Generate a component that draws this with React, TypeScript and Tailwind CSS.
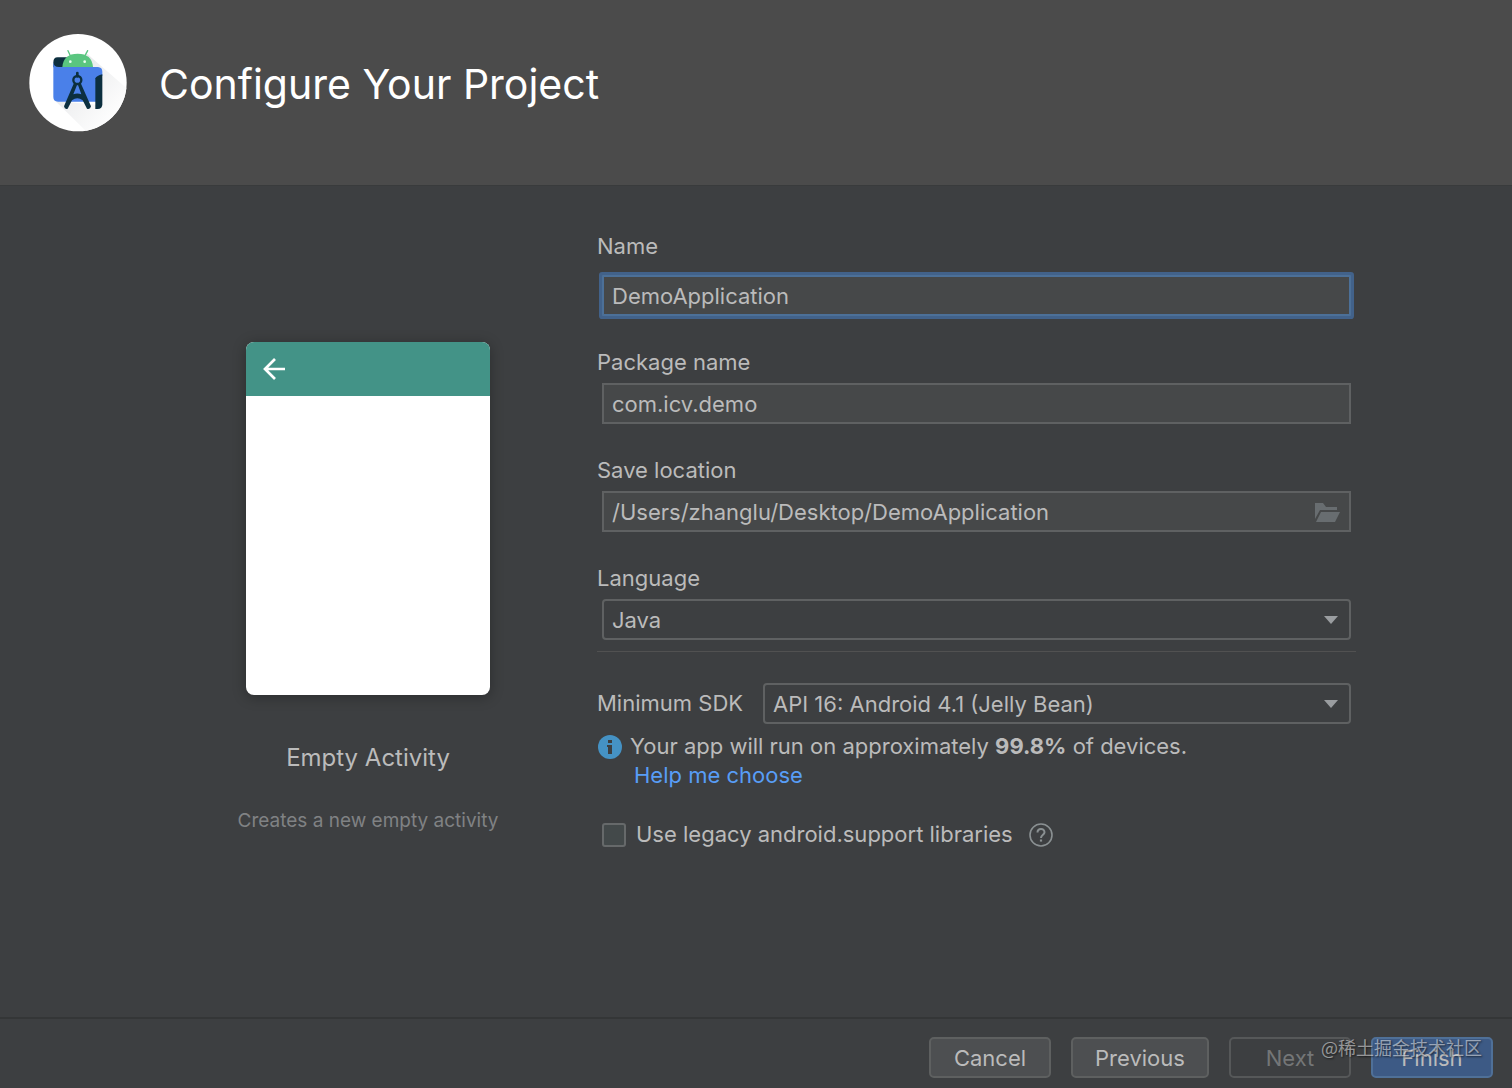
import { useState } from 'react';
import type { ReactNode } from 'react';

const fieldClass =
  'block h-[41px] w-full border-2 border-[#5f6162] bg-[#464849] px-2 text-[22px] text-[#bbbbbb] outline-none';

const buttonClass = 'h-[41px] rounded-[5px] border-2 pt-0.5 text-[22px]';

function StudioLogo() {
  return (
    <svg viewBox="27 27 294 294" className="size-[98px] shrink-0" aria-hidden="true">
      <defs>
        <linearGradient id="logo-shade" x1="0" y1="0" x2="0.8" y2="0.8">
          <stop offset="0.2" stopColor="#e6e7e9" />
          <stop offset="1" stopColor="#fdfdfd" />
        </linearGradient>
        <clipPath id="logo-disc">
          <circle cx="174" cy="173" r="146" />
        </clipPath>
      </defs>
      <circle cx="174" cy="173" r="146" fill="#ffffff" />
      <g clipPath="url(#logo-disc)">
        <path d="M196 82 L320 190 L320 320 L200 320 L106 228 L240 240 Z" fill="url(#logo-shade)" />
      </g>
      <path d="M113 97 H150 V127 H100 V112 Q100 97 113 97 Z" fill="#0c2f3f" />
      <path d="M100 110 Q100 126 117 126 H234 Q247 127 247 140 V153 Q228 153 228 166 V230 H114 Q100 230 100 216 Z" fill="#4a80e9" />
      <path d="M226 160 Q230 152 247 148 V238 Q247 252 233 252 H226 Z" fill="#0c2f3f" />
      <path d="M127 126 Q130 86 173 86 Q216 86 219 126 Z" fill="#5ac680" />
      <path d="M151 92 L144 77 M195 92 L203 77" stroke="#5ac680" strokeWidth="4" strokeLinecap="round" />
      <circle cx="151" cy="110" r="4" fill="#e8fff0" />
      <circle cx="194" cy="110" r="4" fill="#e8fff0" />
      <circle cx="172" cy="165" r="12" fill="none" stroke="#0c2f3f" strokeWidth="7" />
      <path d="M172 144 V154" stroke="#0c2f3f" strokeWidth="8" strokeLinecap="round" />
      <path d="M162 174 L132 244 Q134 254 143 251 L156 226 Q172 214 188 226 L201 251 Q211 254 213 244 L182 174 L174 180 L184 208 Q172 203 160 208 L171 180 Z" fill="#0c2f3f" />
    </svg>
  );
}

function FolderIcon() {
  return (
    <svg viewBox="0 0 25 19" className="h-[19px] w-[25px]" fill="#686d70" aria-hidden="true">
      <path d="M0 0 H8 L11 4 H22 V7 H5 L0 16 Z" />
      <path d="M6 9 H25 L20 19 H1 Z" />
    </svg>
  );
}

function InfoIcon() {
  return (
    <svg viewBox="0 0 24 24" className="mr-2 ml-px size-6 shrink-0" aria-hidden="true">
      <circle cx="12" cy="12" r="12" fill="#4592c4" />
      <path d="M10 5 H14 V8 H10 Z M9 10 H14 V19 H10 V12 H9 Z" fill="#3d3f41" />
    </svg>
  );
}

function HelpIcon() {
  return (
    <svg viewBox="0 0 24 24" className="size-6" fill="none" stroke="#8a9092" aria-hidden="true">
      <circle cx="12" cy="12" r="11" strokeWidth="1.6" />
      <path d="M8.5 9.5 C8.5 4.8 15.5 4.8 15.5 9.2 C15.5 11.8 12 11.7 12 15" strokeWidth="2" />
      <path d="M12 16.5 V18.6" strokeWidth="2.2" />
    </svg>
  );
}

interface DropdownProps {
  id: string;
  options: string[];
}

function Dropdown({ id, options }: DropdownProps) {
  return (
    <div className="relative flex-1">
      <select
        id={id}
        className="block h-[41px] w-full appearance-none rounded-[4px] border-2 border-[#5f6162] bg-[#3d3f41] px-2 pt-0.5 text-[22px] text-[#bbbbbb] outline-none"
      >
        {options.map((option) => (
          <option key={option}>{option}</option>
        ))}
      </select>
      <svg viewBox="0 0 14 8" className="pointer-events-none absolute top-[17px] right-[13px] h-2 w-3.5" fill="#9a9da0" aria-hidden="true">
        <path d="M0 0 H14 L7 8 Z" />
      </svg>
    </div>
  );
}

interface FieldProps {
  id: string;
  label: string;
  children: ReactNode;
}

function Field({ id, label, children }: FieldProps) {
  return (
    <div className="flex flex-col gap-[7px]">
      <label htmlFor={id} className="leading-7">{label}</label>
      <div className="mx-[5px] flex">{children}</div>
    </div>
  );
}

function TemplatePreview() {
  return (
    <section className="flex w-64 shrink-0 flex-col items-center pt-[156px]">
      <div className="h-[353px] w-[244px] overflow-hidden rounded-lg bg-white shadow-[0_2px_14px_rgba(0,0,0,0.3)]">
        <div className="flex h-[54px] items-center bg-[#439387] pl-[17px]">
          <svg viewBox="0 0 22 22" className="size-[22px]" fill="none" stroke="#ffffff" strokeWidth="2.7" aria-hidden="true">
            <path d="M22 11 H2 M12 1 L2 11 L12 21" />
          </svg>
        </div>
      </div>
      <h2 className="mt-12 text-2xl leading-[30px]">Empty Activity</h2>
      <p className="mt-[33px] text-[19px] leading-[30px] whitespace-nowrap text-[#808284]">Creates a new empty activity</p>
    </section>
  );
}

export default function App() {
  const [name, setName] = useState('DemoApplication');
  const [packageName, setPackageName] = useState('com.icv.demo');
  const [location, setLocation] = useState('/Users/zhanglu/Desktop/DemoApplication');
  const [legacy, setLegacy] = useState(false);

  return (
    <div className="flex min-h-screen flex-col bg-[#3d3f41] font-[Inter,sans-serif] text-[22px] text-[#bbbbbb]">
      <header className="flex h-[186px] items-start gap-8 border-b border-[#393b3c] bg-[#4b4b4b] pt-[34px] pl-[29px]">
        <StudioLogo />
        <h1 className="text-[41px] leading-[100px] text-white">Configure Your Project</h1>
      </header>

      <main className="flex flex-1 gap-[101px] pr-[156px] pl-60">
        <TemplatePreview />

        <form className="flex-1 pt-[46px]" onSubmit={(e) => e.preventDefault()}>
          <div className="flex flex-col gap-8">
            <div className="flex flex-col gap-[15px]">
              <label htmlFor="name" className="leading-7">Name</label>
              <div className="mx-[5px]">
                <input
                  id="name"
                  value={name}
                  onChange={(e) => setName(e.target.value)}
                  className="block h-[41px] w-full rounded-[1px] border-2 border-[#4c7098] bg-[#464849] px-2 text-[22px] text-[#bbbbbb] ring-3 ring-[#42628a] outline-none"
                />
              </div>
            </div>
            <Field id="package" label="Package name">
              <input id="package" value={packageName} onChange={(e) => setPackageName(e.target.value)} className={fieldClass} />
            </Field>
            <Field id="location" label="Save location">
              <div className="relative flex-1">
                <input id="location" value={location} onChange={(e) => setLocation(e.target.value)} className={fieldClass} />
                <button type="button" aria-label="Browse" className="absolute top-3 right-[11px]">
                  <FolderIcon />
                </button>
              </div>
            </Field>
            <Field id="language" label="Language">
              <Dropdown id="language" options={['Java', 'Kotlin']} />
            </Field>
          </div>

          <hr className="mt-[11px] border-[#515151]" />

          <div className="mt-[31px] mr-[5px] flex items-center gap-5">
            <label htmlFor="sdk">Minimum SDK</label>
            <Dropdown id="sdk" options={['API 16: Android 4.1 (Jelly Bean)', 'API 21: Android 5.0 (Lollipop)']} />
          </div>
          <p className="mt-2 flex items-center leading-[29px]">
            <InfoIcon />
            <span>
              Your app will run on approximately <b>99.8%</b> of devices.
            </span>
          </p>
          <a href="#help" className="ml-[37px] block w-fit leading-[29px] text-[#589df6]">Help me choose</a>

          <div className="mt-[30px] flex items-center pl-[5px]">
            <input
              id="legacy"
              type="checkbox"
              checked={legacy}
              onChange={(e) => setLegacy(e.target.checked)}
              className="size-6 appearance-none rounded-[3px] border-2 border-[#66696a] bg-[#43494a] checked:bg-[#4592c4]"
            />
            <label htmlFor="legacy" className="ml-2.5 leading-[29px]">Use legacy android.support libraries</label>
            <button type="button" aria-label="Help" className="ml-4">
              <HelpIcon />
            </button>
          </div>
        </form>
      </main>

      <footer className="relative flex h-[71px] items-start justify-end gap-5 border-t-2 border-[#343637] pt-[18px] pr-[19px]">
        <button type="button" className={`${buttonClass} w-[122px] border-[#5e6060] bg-[#4d4f51]`}>Cancel</button>
        <button type="button" className={`${buttonClass} w-[138px] border-[#5e6060] bg-[#4d4f51]`}>Previous</button>
        <button type="button" disabled className={`${buttonClass} w-[122px] border-[#565859] text-[#747677]`}>Next</button>
        <button type="button" className={`${buttonClass} w-[122px] border-[#4f7098] bg-[#3d5a85]`}>Finish</button>
        <span className="pointer-events-none absolute top-4 right-[30px] font-['Noto_Sans_CJK_SC',sans-serif] text-lg leading-6 text-white/50 [text-shadow:1px_1px_2px_rgba(0,0,0,0.6)]">
          @稀土掘金技术社区
        </span>
      </footer>
    </div>
  );
}
